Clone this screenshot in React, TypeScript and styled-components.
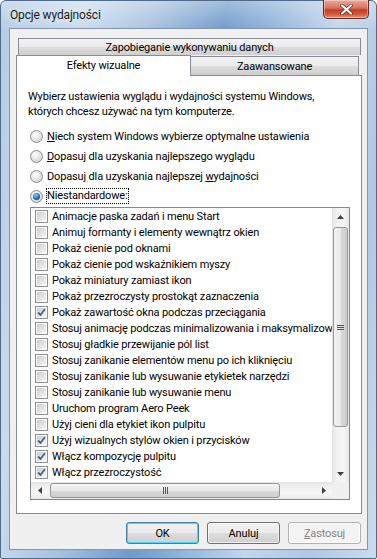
import React from 'react';
import styled, { createGlobalStyle } from 'styled-components';

const GlobalStyle = createGlobalStyle`
  html, body {
    margin: 0;
    padding: 0;
  }
  body {
    font-family: Roboto, "Liberation Sans", sans-serif;
    font-size: 11px;
    letter-spacing: -0.15px;
    color: #000;
  }
`;

const Window = styled.div`
  width: 377px;
  height: 559px;
  box-sizing: border-box;
  display: flex;
  flex-direction: column;
  padding: 0 8px 8px;
  border: 1px solid #4f6a8a;
  border-radius: 6px 6px 2px 2px;
  background:
    linear-gradient(180deg, rgba(255, 255, 255, 0.35), rgba(255, 255, 255, 0) 30px),
    linear-gradient(100deg, #b3cbe4 0%, #c9dbee 18%, #a9c3df 32%, #6f9acb 48%, #8db2d9 58%, #c2d6ec 72%, #b0c8e3 86%, #cbdcee 100%);
`;

const TitleBar = styled.div`
  height: 28px;
  flex: none;
  display: flex;
  justify-content: space-between;
  align-items: flex-start;
  margin-top: -1px;
`;

const Title = styled.span`
  padding: 8px 0 0 1px;
  font-size: 12px;
  color: #1b1b1b;
  text-shadow: 0 0 8px rgba(255, 255, 255, 0.9);
`;

const CloseButton = styled.div`
  width: 46px;
  height: 19px;
  margin-right: -1px;
  box-sizing: border-box;
  border: 1px solid #6b2a22;
  border-top: none;
  border-radius: 0 0 5px 5px;
  background: linear-gradient(180deg, #e9a99c 0%, #d8735e 45%, #c13e27 55%, #cf5b40 80%, #e59a7f 100%);
  display: flex;
  align-items: center;
  justify-content: center;
  box-shadow: inset 0 0 0 1px rgba(255, 255, 255, 0.35);
`;

const Client = styled.div`
  flex: 1;
  display: flex;
  flex-direction: column;
  background: #f0f0f0;
  border: 1px solid #8596ab;
  padding: 9px 7px 0 6px;
`;

const Tabs = styled.div`
  width: 346px;
  display: flex;
  flex-direction: column;
`;

const tabFace = `
  box-sizing: border-box;
  border: 1px solid #898c95;
  border-bottom: none;
  display: flex;
  align-items: center;
  justify-content: center;
`;

const BackTab = styled.div`
  ${tabFace}
  width: 343px;
  height: 17px;
  margin-left: 2px;
  background: linear-gradient(180deg, #f3f3f3 0%, #ebebeb 50%, #dddddd 51%, #cfcfcf 100%);
  padding-top: 1px;
`;

const FrontRow = styled.div`
  display: flex;
  align-items: flex-end;
  height: 20px;
`;

const Tab = styled.div<{ $active?: boolean; $width: number }>`
  ${tabFace}
  width: ${(p) => p.$width}px;
  position: relative;
  height: ${(p) => (p.$active ? '21px' : '19px')};
  margin-bottom: ${(p) => (p.$active ? '-1px' : '0')};
  margin-left: ${(p) => (p.$active ? '0' : '-1px')};
  z-index: ${(p) => (p.$active ? 2 : 1)};
  background: ${(p) =>
    p.$active ? '#fff' : 'linear-gradient(180deg, #f3f3f3 0%, #ebebeb 50%, #dddddd 51%, #cfcfcf 100%)'};
  padding-bottom: ${(p) => (p.$active ? '2px' : '0')};
`;

const Panel = styled.div`
  box-sizing: border-box;
  width: 346px;
  height: 439px;
  border: 1px solid #898c95;
  background: #fff;
  padding: 13px 0 0 11px;
  display: flex;
  flex-direction: column;
`;

const Description = styled.p`
  margin: 0;
  line-height: 15px;
  white-space: nowrap;
`;

const RadioGroup = styled.div`
  margin: 7px 0 0 2px;
  display: flex;
  flex-direction: column;
`;

const RadioRow = styled.label`
  height: 20px;
  display: flex;
  align-items: center;
  gap: 4px;
`;

const RadioCircle = styled.span<{ $checked?: boolean }>`
  width: 13px;
  height: 13px;
  box-sizing: border-box;
  border-radius: 50%;
  border: 1px solid #8e8f8f;
  background: radial-gradient(circle at 40% 35%, #ffffff 0%, #e6e6e6 45%, #c9c9c9 100%);
  display: flex;
  align-items: center;
  justify-content: center;
  &::after {
    content: '';
    display: ${(p) => (p.$checked ? 'block' : 'none')};
    width: 7px;
    height: 7px;
    border-radius: 50%;
    background: radial-gradient(circle at 40% 35%, #8fd3f5 0%, #2a7cc0 45%, #0d3560 100%);
  }
`;

const Focus = styled.span`
  outline: 1px dotted #000;
  outline-offset: 0;
  line-height: 14px;
`;

const ListBox = styled.div`
  margin: 1px 0 0 2px;
  width: 320px;
  height: 293px;
  box-sizing: border-box;
  border: 1px solid #828790;
  display: grid;
  grid-template-columns: 301px 17px;
  grid-template-rows: 274px 17px;
  background: #fff;
`;

const Items = styled.div`
  overflow: hidden;
  white-space: nowrap;
`;

const Item = styled.div`
  height: 16px;
  display: flex;
  align-items: center;
  gap: 4px;
  padding-left: 4px;
`;

const CheckBox = styled.span`
  flex: none;
  width: 13px;
  height: 13px;
  box-sizing: border-box;
  border: 1px solid #8e8f8f;
  background: #fff;
  padding: 1px;
  display: flex;
  & > span {
    flex: 1;
    background: linear-gradient(135deg, #cbcbcb 0%, #e7e7e7 60%, #f6f6f6 100%);
    display: flex;
    align-items: center;
    justify-content: center;
  }
`;

const VScroll = styled.div`
  display: flex;
  flex-direction: column;
  background: linear-gradient(90deg, #e3e3e3, #f2f2f2 30%, #f5f5f5 70%, #e8e8e8);
`;

const HScroll = styled.div`
  display: flex;
  background: linear-gradient(180deg, #e3e3e3, #f2f2f2 30%, #f5f5f5 70%, #e8e8e8);
`;

const Corner = styled.div`
  background: #f0f0f0;
`;

const Arrow = styled.div`
  flex: none;
  width: 17px;
  height: 17px;
  display: flex;
  align-items: center;
  justify-content: center;
`;

const Thumb = styled.div<{ $horizontal?: boolean }>`
  box-sizing: border-box;
  border: 1px solid #979797;
  border-radius: 3px;
  display: flex;
  align-items: center;
  justify-content: center;
  ${(p) =>
    p.$horizontal
      ? `
    height: 15px;
    width: 230px;
    margin: 1px 0 0 2px;
    background: linear-gradient(180deg, #f4f4f4 0%, #e8e8e8 50%, #d8d8d8 51%, #cfcfcf 100%);
  `
      : `
    width: 15px;
    height: 200px;
    margin: 2px 0 0 1px;
    background: linear-gradient(90deg, #f4f4f4 0%, #e8e8e8 50%, #d8d8d8 51%, #cfcfcf 100%);
  `}
`;

const Spacer = styled.div`
  flex: 1;
`;

const ButtonRow = styled.div`
  display: flex;
  justify-content: flex-end;
  gap: 8px;
  margin: 8px -1px 0 0;
`;

const Button = styled.button<{ $default?: boolean }>`
  width: 73px;
  height: 22px;
  box-sizing: border-box;
  font: inherit;
  letter-spacing: inherit;
  padding: 0;
  border-radius: 3px;
  border: 1px solid ${(p) => (p.$default ? '#3c7fb1' : '#707070')};
  background: linear-gradient(180deg, #f2f2f2 0%, #ebebeb 50%, #dddddd 51%, #cfcfcf 100%);
  box-shadow: inset 0 0 0 1px ${(p) => (p.$default ? '#48d8fb' : 'rgba(255,255,255,0.7)')};
  color: #000;
  &:disabled {
    border-color: #adb2b5;
    background: #f4f4f4;
    box-shadow: inset 0 0 0 1px #fcfcfc;
    color: #838383;
  }
`;

const Triangle = ({ dir }: { dir: 'up' | 'down' | 'left' | 'right' }) => {
  const pts = {
    up: '0,4 7,4 3.5,0',
    down: '0,0 7,0 3.5,4',
    left: '4,0 4,7 0,3.5',
    right: '0,0 0,7 4,3.5',
  }[dir];
  const vertical = dir === 'up' || dir === 'down';
  return (
    <svg width={vertical ? 7 : 4} height={vertical ? 4 : 7}>
      <polygon points={pts} fill="#404040" />
    </svg>
  );
};

const CheckMark = () => (
  <svg width="9" height="9" viewBox="0 0 9 9">
    <path d="M1 4.5 L3.5 7 L8 1" fill="none" stroke="#4a5f97" strokeWidth="1.8" />
  </svg>
);

const items: [string, boolean][] = [
  ['Animacje paska zadań i menu Start', false],
  ['Animuj formanty i elementy wewnątrz okien', false],
  ['Pokaż cienie pod oknami', false],
  ['Pokaż cienie pod wskaźnikiem myszy', false],
  ['Pokaż miniatury zamiast ikon', false],
  ['Pokaż przezroczysty prostokąt zaznaczenia', false],
  ['Pokaż zawartość okna podczas przeciągania', true],
  ['Stosuj animację podczas minimalizowania i maksymalizowania okien', false],
  ['Stosuj gładkie przewijanie pól list', false],
  ['Stosuj zanikanie elementów menu po ich kliknięciu', false],
  ['Stosuj zanikanie lub wysuwanie etykietek narzędzi', false],
  ['Stosuj zanikanie lub wysuwanie menu', false],
  ['Uruchom program Aero Peek', false],
  ['Użyj cieni dla etykiet ikon pulpitu', false],
  ['Użyj wizualnych stylów okien i przycisków', true],
  ['Włącz kompozycję pulpitu', true],
  ['Włącz przezroczystość', true],
];

export default function App() {
  return (
    <>
      <GlobalStyle />
      <Window>
        <TitleBar>
          <Title>Opcje wydajności</Title>
          <CloseButton>
            <svg width="13" height="11" viewBox="0 0 13 11">
              <path d="M2 1.5 L11 9.5 M11 1.5 L2 9.5" stroke="#6b2a22" strokeWidth="3.6" strokeLinecap="round" />
              <path d="M2 1.5 L11 9.5 M11 1.5 L2 9.5" stroke="#fff" strokeWidth="2.2" strokeLinecap="round" />
            </svg>
          </CloseButton>
        </TitleBar>
        <Client>
          <Tabs>
            <BackTab>Zapobieganie wykonywaniu danych</BackTab>
            <FrontRow>
              <Tab $active $width={175}>Efekty wizualne</Tab>
              <Tab $width={169}>Zaawansowane</Tab>
            </FrontRow>
            <Panel>
              <Description>
                Wybierz ustawienia wyglądu i wydajności systemu Windows,
                <br />
                których chcesz używać na tym komputerze.
              </Description>
              <RadioGroup>
                <RadioRow>
                  <RadioCircle />
                  <span>
                    <u>N</u>iech system Windows wybierze optymalne ustawienia
                  </span>
                </RadioRow>
                <RadioRow>
                  <RadioCircle />
                  <span>
                    <u>D</u>opasuj dla uzyskania najlepszego wyglądu
                  </span>
                </RadioRow>
                <RadioRow>
                  <RadioCircle />
                  <span>
                    Dopasuj dla uzyskania najlepszej <u>w</u>ydajności
                  </span>
                </RadioRow>
                <RadioRow>
                  <RadioCircle $checked />
                  <Focus>Niestandardowe:</Focus>
                </RadioRow>
              </RadioGroup>
              <ListBox>
                <Items>
                  {items.map(([label, checked]) => (
                    <Item key={label}>
                      <CheckBox>
                        <span>{checked && <CheckMark />}</span>
                      </CheckBox>
                      {label}
                    </Item>
                  ))}
                </Items>
                <VScroll>
                  <Arrow>
                    <Triangle dir="up" />
                  </Arrow>
                  <Thumb>
                    <svg width="7" height="7">
                      <path d="M0 1.5 H7 M0 3.5 H7 M0 5.5 H7" stroke="#555" strokeWidth="1" />
                    </svg>
                  </Thumb>
                  <Spacer />
                  <Arrow>
                    <Triangle dir="down" />
                  </Arrow>
                </VScroll>
                <HScroll>
                  <Arrow>
                    <Triangle dir="left" />
                  </Arrow>
                  <Thumb $horizontal>
                    <svg width="7" height="7">
                      <path d="M1.5 0 V7 M3.5 0 V7 M5.5 0 V7" stroke="#555" strokeWidth="1" />
                    </svg>
                  </Thumb>
                  <Spacer />
                  <Arrow>
                    <Triangle dir="right" />
                  </Arrow>
                </HScroll>
                <Corner />
              </ListBox>
            </Panel>
          </Tabs>
          <ButtonRow>
            <Button $default>OK</Button>
            <Button>Anuluj</Button>
            <Button disabled>
              <u>Z</u>astosuj
            </Button>
          </ButtonRow>
        </Client>
      </Window>
    </>
  );
}
